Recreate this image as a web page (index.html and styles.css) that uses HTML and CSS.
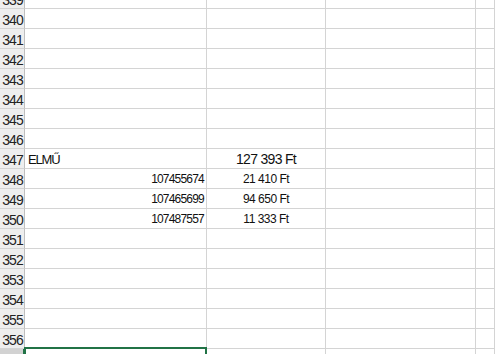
FILE: index.html
```html
<!DOCTYPE html>
<html lang="hu">
<head>
<meta charset="utf-8">
<title>Munkalap</title>
<link rel="stylesheet" href="styles.css">
</head>
<body>
<div class="sheet">
  <div class="hd">339</div><div class="c"></div><div class="c"></div><div class="c"></div><div class="c"></div>
  <div class="hd">340</div><div class="c"></div><div class="c"></div><div class="c"></div><div class="c"></div>
  <div class="hd">341</div><div class="c"></div><div class="c"></div><div class="c"></div><div class="c"></div>
  <div class="hd">342</div><div class="c"></div><div class="c"></div><div class="c"></div><div class="c"></div>
  <div class="hd">343</div><div class="c"></div><div class="c"></div><div class="c"></div><div class="c"></div>
  <div class="hd">344</div><div class="c"></div><div class="c"></div><div class="c"></div><div class="c"></div>
  <div class="hd">345</div><div class="c"></div><div class="c"></div><div class="c"></div><div class="c"></div>
  <div class="hd">346</div><div class="c"></div><div class="c"></div><div class="c"></div><div class="c"></div>
  <div class="hd">347</div><div class="c name over">ELMŰ</div><div class="c big center">127 393 Ft</div><div class="c"></div><div class="c"></div>
  <div class="hd">348</div><div class="c num right">107455674</div><div class="c small center">21 410 Ft</div><div class="c"></div><div class="c"></div>
  <div class="hd">349</div><div class="c num right">107465699</div><div class="c small center">94 650 Ft</div><div class="c"></div><div class="c"></div>
  <div class="hd">350</div><div class="c num right">107487557</div><div class="c small center">11 333 Ft</div><div class="c"></div><div class="c"></div>
  <div class="hd">351</div><div class="c"></div><div class="c"></div><div class="c"></div><div class="c"></div>
  <div class="hd">352</div><div class="c"></div><div class="c"></div><div class="c"></div><div class="c"></div>
  <div class="hd">353</div><div class="c"></div><div class="c"></div><div class="c"></div><div class="c"></div>
  <div class="hd">354</div><div class="c"></div><div class="c"></div><div class="c"></div><div class="c"></div>
  <div class="hd">355</div><div class="c"></div><div class="c"></div><div class="c"></div><div class="c"></div>
  <div class="hd">356</div><div class="c"></div><div class="c"></div><div class="c"></div><div class="c"></div>
  <div class="hd hd-sel">357</div><div class="c sel"></div><div class="c"></div><div class="c"></div><div class="c"></div>
</div>
</body>
</html>
```
FILE: styles.css
```css
html, body {
  margin: 0;
  padding: 0;
  background: #ffffff;
  overflow: hidden;
}

.sheet {
  display: grid;
  grid-template-columns: 25px 182px 119px 150px 1fr;
  grid-auto-rows: 20px;
  margin-top: -11px;
  font-family: "Liberation Sans", Arial, sans-serif;
  color: #111;
}

.hd, .c {
  box-sizing: border-box;
  border-right: 1px solid #d4d4d4;
  border-bottom: 1px solid #d4d4d4;
  display: flex;
  align-items: flex-end;
  line-height: 1;
  white-space: nowrap;
}

.hd {
  background: #eeeeee;
  border-right-color: #bfbfbf;
  justify-content: center;
  font-size: 14px;
  letter-spacing: -1px;
  color: #222;
  padding: 0 0 1px 1px;
  overflow: hidden;
}

.hd-sel {
  background: #d2d2d2;
  color: #217346;
  border-right: 2px solid #217346;
}

.c {
  position: relative;
  padding: 0 2px 3px 2px;
}

.name {
  font-size: 13px;
  letter-spacing: -1.2px;
  padding-left: 3px;
  padding-bottom: 2px;
}

.big {
  font-size: 14px;
  letter-spacing: -0.7px;
  padding-bottom: 2px;
}

.num {
  font-size: 12px;
  letter-spacing: -0.8px;
  padding-bottom: 3px;
}

.small {
  font-size: 12px;
  letter-spacing: -0.5px;
  padding-bottom: 3px;
}

.over {
  overflow: visible;
}

.right {
  justify-content: flex-end;
}

.center {
  justify-content: center;
}

.sel::after {
  content: "";
  position: absolute;
  top: -2px;
  left: -1px;
  right: -1px;
  bottom: -4px;
  border: 2px solid #217346;
}
```
